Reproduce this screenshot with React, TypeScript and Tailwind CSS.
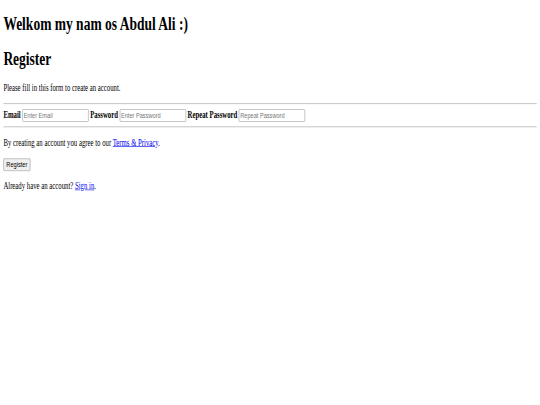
const serif = { fontFamily: '"Liberation Serif", "Times New Roman", serif' };

function Field({ label, placeholder, type }: { label: string; placeholder: string; type: string }) {
  return (
    <>
      <label>
        <b>{label}</b>
      </label>{' '}
      <input
        type={type}
        placeholder={placeholder}
        className="inline-block w-[157px] h-[21px] rounded-[2px] border border-[#8f8f8f] bg-white px-[2px] py-px align-baseline font-['Liberation_Sans',Arial,sans-serif] text-[13.333px] placeholder:text-[#757575]"
      />{' '}
    </>
  );
}

export default function App() {
  return (
    <div className="w-[540px] h-[405px] overflow-hidden bg-white">
      <div
        className="flow-root w-[1280px] h-[675px] origin-top-left scale-x-[0.421875] scale-y-[0.6] px-2 text-[16px] leading-[18.4px] text-black"
        style={serif}
      >
        <h1 className="mt-[21.44px] mb-[21.44px] text-[32px] leading-[36.8px] font-bold">
          Welkom my nam os Abdul Ali :)
        </h1>
        <form>
          <div>
            <h1 className="my-[21.44px] text-[32px] leading-[36.8px] font-bold">Register</h1>
            <p className="my-4">Please fill in this form to create an account.</p>
            <hr className="my-2 h-0 border-t border-b border-t-[#9a9a9a] border-b-[#eeeeee]" />
            <Field label="Email" placeholder="Enter Email" type="text" />
            <Field label="Password" placeholder="Enter Password" type="password" />
            <Field label="Repeat Password" placeholder="Repeat Password" type="password" />
            <hr className="my-2 h-0 border-t border-b border-t-[#9a9a9a] border-b-[#eeeeee]" />
            <p className="my-4">
              By creating an account you agree to our{' '}
              <a href="#" className="text-[#0000ee] underline">
                Terms &amp; Privacy
              </a>
              .
            </p>
            <button
              type="submit"
              className="rounded-[2px] border border-[#8f8f8f] bg-[#efefef] px-[6px] py-[2px] font-['Liberation_Sans',Arial,sans-serif] text-[13.333px] leading-[normal] text-black"
            >
              Register
            </button>
          </div>
          <div>
            <p className="my-4">
              Already have an account?{' '}
              <a href="#" className="text-[#0000ee] underline">
                Sign in
              </a>
              .
            </p>
          </div>
        </form>
      </div>
    </div>
  );
}
